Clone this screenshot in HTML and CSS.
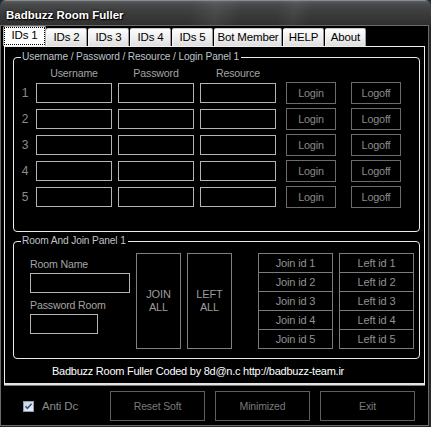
FILE: index.html
```html
<!DOCTYPE html>
<html>
<head>
<meta charset="utf-8">
<title>Badbuzz Room Fuller</title>
<link rel="stylesheet" href="styles.css">
</head>
<body>
<div class="window">
  <div class="titlebar"><span class="title">Badbuzz Room Fuller</span></div>
  <div class="client">
    <div class="tabs">
      <div class="tab active">IDs 1</div>
      <div class="tab">IDs 2</div>
      <div class="tab">IDs 3</div>
      <div class="tab">IDs 4</div>
      <div class="tab">IDs 5</div>
      <div class="tab wide">Bot Member</div>
      <div class="tab">HELP</div>
      <div class="tab">About</div>
    </div>
    <div class="panel">
      <fieldset class="group login-group">
        <legend>Username / Password / Resource / Login Panel 1</legend>
        <div class="head">
          <span class="num"></span>
          <span class="col">Username</span>
          <span class="col">Password</span>
          <span class="col">Resource</span>
        </div>
        <div class="lrow"><span class="num">1</span><span class="tb"></span><span class="tb"></span><span class="tb last"></span><span class="btn login">Login</span><span class="btn">Logoff</span></div>
        <div class="lrow"><span class="num">2</span><span class="tb"></span><span class="tb"></span><span class="tb last"></span><span class="btn login">Login</span><span class="btn">Logoff</span></div>
        <div class="lrow"><span class="num">3</span><span class="tb"></span><span class="tb"></span><span class="tb last"></span><span class="btn login">Login</span><span class="btn">Logoff</span></div>
        <div class="lrow"><span class="num">4</span><span class="tb"></span><span class="tb"></span><span class="tb last"></span><span class="btn login">Login</span><span class="btn">Logoff</span></div>
        <div class="lrow"><span class="num">5</span><span class="tb"></span><span class="tb"></span><span class="tb last"></span><span class="btn login">Login</span><span class="btn">Logoff</span></div>
      </fieldset>
      <fieldset class="group room-group">
        <legend>Room And Join Panel 1</legend>
        <div class="room-body">
          <div class="room-fields">
            <div class="lbl">Room Name</div>
            <div class="tb room-name"></div>
            <div class="lbl lbl2">Password Room</div>
            <div class="tb room-pass"></div>
          </div>
          <div class="big-btn">JOIN<br>ALL</div>
          <div class="big-btn left-all">LEFT<br>ALL</div>
          <div class="idlist join-list">
            <div class="iditem">Join id 1</div>
            <div class="iditem">Join id 2</div>
            <div class="iditem">Join id 3</div>
            <div class="iditem">Join id 4</div>
            <div class="iditem">Join id 5</div>
          </div>
          <div class="idlist">
            <div class="iditem">Left id 1</div>
            <div class="iditem">Left id 2</div>
            <div class="iditem">Left id 3</div>
            <div class="iditem">Left id 4</div>
            <div class="iditem">Left id 5</div>
          </div>
        </div>
      </fieldset>
      <div class="footer">Badbuzz Room Fuller Coded by 8d@n.c http://badbuzz-team.ir</div>
    </div>
    <div class="bottombar">
      <div class="antidc">
        <svg class="check" width="11" height="11" viewBox="0 0 11 11">
          <defs>
            <linearGradient id="cbg" x1="0" y1="0" x2="1" y2="1">
              <stop offset="0" stop-color="#c9d1dc"/>
              <stop offset="1" stop-color="#eef1f5"/>
            </linearGradient>
          </defs>
          <rect x="0.5" y="0.5" width="10" height="10" fill="url(#cbg)" stroke="#8e9db2"/>
          <path d="M2.5 5.2 L4.4 7.3 L8.6 2.8" fill="none" stroke="#34518a" stroke-width="1.6"/>
        </svg>
        <span class="antidc-label">Anti Dc</span>
      </div>
      <div class="bbtn">Reset Soft</div>
      <div class="bbtn">Minimized</div>
      <div class="bbtn">Exit</div>
    </div>
  </div>
</div>
</body>
</html>
```

FILE: styles.css
```css
* { box-sizing: border-box; }
html, body { margin: 0; padding: 0; }
body {
  background: #1d2b35;
  font-family: "Liberation Sans", Arial, sans-serif;
  font-size: 11px;
  letter-spacing: -0.15px;
}
.window {
  width: 431px;
  height: 427px;
  background: #272727;
  border-radius: 6px 6px 0 0;
  overflow: hidden;
}
.titlebar {
  height: 25px;
  display: flex;
  align-items: center;
  padding: 4px 0 0 6px;
  background:
    linear-gradient(100deg, rgba(255,255,255,0) 44%, rgba(255,255,255,0.07) 50%, rgba(255,255,255,0) 56%, rgba(255,255,255,0) 64%, rgba(255,255,255,0.05) 68%, rgba(255,255,255,0) 72%),
    linear-gradient(to bottom, #5a5e62 0px, #484a4c 3px, #3e3e3e 10px, #343434 20px, #2e2e2e 25px);
  border-top: 1px solid #8a8a8a;
}
.title {
  font-weight: bold;
  font-size: 11.5px;
  letter-spacing: 0;
  line-height: 14px;
  color: #ffffff;
  text-shadow: 0 0 3px #000, 1px 1px 1px #000;
}
.client {
  width: 429px;
  height: 401px;
  border: 1px solid #6b6b6b;
  background: #000;
  display: flex;
  flex-direction: column;
}
.tabs {
  height: 20px;
  display: flex;
  align-items: flex-end;
  padding-left: 2px;
}
.tab {
  position: relative;
  width: 41px;
  height: 18px;
  margin-right: 1px;
  border: 1px solid #9a9a9a;
  border-bottom: none;
  border-left-color: #f4f4f4;
  border-top-color: #c8c8c8;
  border-radius: 2px 2px 0 0;
  background: linear-gradient(to bottom, #fdfdfd, #ececec 60%, #dedede);
  color: #000;
  display: flex;
  align-items: center;
  justify-content: center;
  line-height: 13px;
  font-size: 11.5px;
}
.tab.wide { width: 68px; }
.tab.active {
  width: 43px;
  height: 20px;
  margin-right: 0;
  background: #ffffff;
  border-color: #b0b0b0;
  outline: 1px dotted #000;
  outline-offset: -2px;
  padding-bottom: 3px;
}
.panel {
  margin-left: 3px;
  width: 421px;
  height: 339px;
  border: 1px solid #f0f0f0;
  border-bottom: 2px solid #e4e4e4;
  box-shadow: 0 1px 0 #7a7a7a;
  background: #000;
}
.group {
  margin: 0 0 0 8px;
  padding: 0;
  width: 407px;
  min-width: 0;
  border: 1px solid #ececec;
  border-radius: 4px;
}
.group legend {
  margin-left: 7px;
  padding: 0 2px 0 1px;
  line-height: 14px;
  font-size: 10.2px;
  letter-spacing: -0.13px;
  color: #bfc3c8;
}
.login-group {
  margin-top: 3px;
  height: 182px;
}
.head {
  display: flex;
  margin-top: 2px;
  height: 14px;
  line-height: 14px;
  color: #a4a4a4;
  font-size: 10.6px;
}
.num {
  width: 22px;
  text-align: center;
  color: #8c8c8c;
  font-size: 12px;
}
.col {
  width: 76px;
  margin-right: 6px;
  text-align: center;
}
.lrow {
  display: flex;
  align-items: center;
  height: 26px;
}
.tb {
  display: block;
  width: 76px;
  height: 20px;
  margin-right: 6px;
  border: 1px solid #b4b4b4;
}
.tb.last { margin-right: 10px; }
.btn {
  width: 50px;
  height: 22px;
  border: 1px solid #6c6c6c;
  color: #8a8a8a;
  display: flex;
  align-items: center;
  justify-content: center;
  font-size: 10.8px;
}
.btn.login { margin-right: 15px; }
.room-group {
  margin-top: 2px;
  height: 125px;
}
.room-body {
  display: flex;
  padding: 5px 0 0 16px;
}
.room-fields {
  width: 100px;
  margin-right: 6px;
  padding-top: 4px;
}
.lbl {
  line-height: 14px;
  color: #a4a4a4;
  font-size: 10.6px;
}
.lbl2 { margin-top: 5px; }
.room-name { width: 100px; margin: 2px 0 0 0; }
.room-pass { width: 68px; margin: 2px 0 0 0; }
.big-btn {
  width: 45px;
  height: 96px;
  margin-right: 6px;
  border: 1px solid #808080;
  color: #9c9c9c;
  display: flex;
  align-items: center;
  justify-content: center;
  text-align: center;
  line-height: 13px;
  font-size: 11px;
}
.big-btn.left-all { margin-right: 26px; }
.idlist {
  width: 75px;
  display: flex;
  flex-direction: column;
}
.join-list { margin-right: 6px; }
.iditem {
  height: 20px;
  border: 1px solid #7c7c7c;
  color: #929292;
  display: flex;
  align-items: center;
  justify-content: center;
  font-size: 11px;
}
.iditem + .iditem { margin-top: -1px; }
.footer {
  margin-top: 3px;
  padding-left: 47px;
  line-height: 18px;
  color: #ffffff;
  font-size: 11px;
  letter-spacing: -0.25px;
}
.bottombar {
  height: 40px;
  display: flex;
  align-items: flex-start;
  padding: 6px 0 0 22px;
}
.antidc {
  width: 87px;
  height: 30px;
  display: flex;
  align-items: center;
}
.check { display: block; }
.antidc-label {
  margin-left: 8px;
  color: #8a8a8a;
  font-size: 11.5px;
}
.bbtn {
  width: 95px;
  height: 30px;
  margin-right: 10px;
  border: 1px solid #5e5e5e;
  color: #7a7a7a;
  display: flex;
  align-items: center;
  justify-content: center;
  font-size: 10.5px;
}
```
